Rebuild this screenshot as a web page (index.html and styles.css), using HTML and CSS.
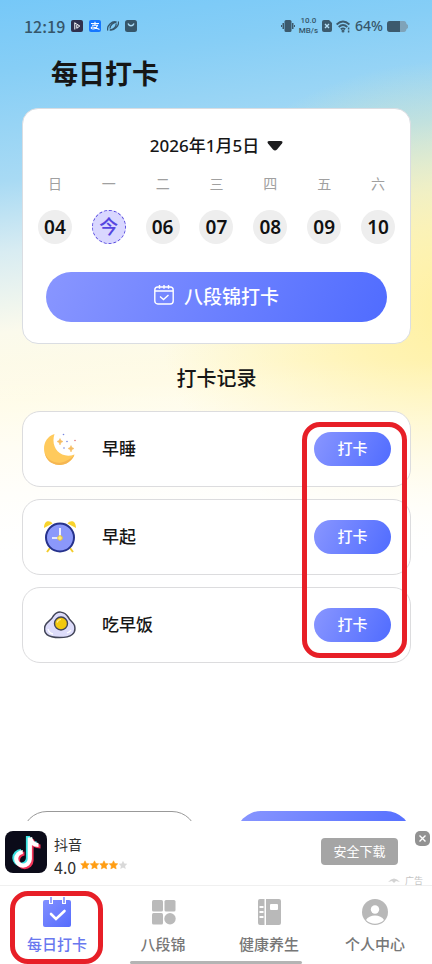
FILE: index.html
```html
<!DOCTYPE html>
<html lang="zh-CN">
<head>
<meta charset="utf-8">
<meta name="viewport" content="width=device-width, initial-scale=1">
<title>每日打卡</title>
<link rel="stylesheet" href="styles.css">
</head>
<body>
<div class="screen">
  <div class="status">
    <div class="status-group">
      <span class="clock">12:19</span>
      <svg width="12" height="12" viewBox="0 0 12 12"><rect width="12" height="12" rx="2" fill="#30304d"/><path d="M3.800 2.500v7M3.800 3l5 3-3 2.300V5" fill="none" stroke="#fff" stroke-width="1"/></svg>
      <svg width="12" height="12" viewBox="0 0 12 12"><rect width="12" height="12" rx="2" fill="#1677ff"/><path d="M2 3.500h8M6 1.800v3.500M3 5.300h5.500C7.500 8 5.500 9 4 9 1.500 9 1.800 6.700 4 7c2 .2 4 1.500 6.500 2.500" fill="none" stroke="#fff" stroke-width="1.100"/></svg>
      <svg width="12" height="12" viewBox="0 0 12 12" fill="none" stroke="#36566a" stroke-width="1.300"><path d="M.8 10.500C-.5 6 5 .5 9.500 2 6 2.500 3 5.500 3 8.500M11.300 1.500c1.200 4-4 9.500-8.500 8.500 3.500-.3 6.500-3 6.500-6.500"/></svg>
      <svg width="12" height="12" viewBox="0 0 12 12"><rect width="12" height="12" rx="2.500" fill="#36566a"/><path d="M3 3.500c1 3 5 3 6 0" fill="none" stroke="#a9dbf7" stroke-width="1.300"/></svg>
    </div>
    <div class="status-group status-right">
      <svg width="14" height="14" viewBox="0 0 14 14" fill="#3c5a6d"><rect x="3.500" y="1" width="7" height="12" rx="1.500"/><path d="M1.500 4h1.500v6H1.500zM11 4h1.500v6H11zM0 6h1v2H0zM13 6h1v2h-1z"/></svg>
      <div class="speed"><span>10.0</span><span>MB/s</span></div>
      <svg width="10" height="12" viewBox="0 0 10 12"><path d="M2 0h5l3 3v7q0 2-2 2H2q-2 0-2-2V2q0-2 2-2z" fill="#3c5a6d"/><path d="M3 4l4 4M7 4L3 8" stroke="#b5def5" stroke-width="1.400"/></svg>
      <svg width="15" height="13" viewBox="0 0 15 13" fill="none" stroke="#3c5a6d" stroke-width="1.800"><path d="M.6 4.500Q7 -1.500 13.400 4.500M2.700 7Q7 3 11.300 7M4.800 9.300Q7 7.500 9.200 9.300"/><circle cx="7" cy="11" r=".6"/><path d="M12.600 7.500v2M12.600 10.500v2" stroke-width="1.500"/></svg>
      <span class="percent">64%</span>
      <svg width="21" height="11" viewBox="0 0 21 11"><path d="M3 0h14q2 0 2.500 3l1.500 1v3l-1.500 1q-.5 3-2.500 3H3q-3 0-3-3V3q0-3 3-3z" fill="#7fa3b9"/><path d="M3 0h10v11H3q-3 0-3-3V3q0-3 3-3z" fill="#3c5a6d"/></svg>
    </div>
  </div>

  <main class="main">
    <h1 class="title">每日打卡</h1>

    <section class="calendar">
      <button class="date" type="button">2026年1月5日
        <svg width="16" height="10" viewBox="0 0 16 10"><path d="M2.500 0h11q3 0 1.500 2.500L10 8.500q-2 2-4 0L1 2.500Q-.5 0 2.500 0z" fill="#1d1d1f"/></svg>
      </button>
      <div class="week">
        <div class="day"><span>日</span><button type="button">04</button></div>
        <div class="day"><span>一</span><button class="today" type="button">今</button></div>
        <div class="day"><span>二</span><button type="button">06</button></div>
        <div class="day"><span>三</span><button type="button">07</button></div>
        <div class="day"><span>四</span><button type="button">08</button></div>
        <div class="day"><span>五</span><button type="button">09</button></div>
        <div class="day"><span>六</span><button type="button">10</button></div>
      </div>
      <button class="primary" type="button">
        <svg width="20" height="20" viewBox="0 0 20 20" fill="none" stroke="#fff" stroke-width="1.400"><rect x=".8" y="2" width="18.400" height="17" rx="3"/><path d="M1 6h18M5.500 0v3.800M10 0v3.800M14.500 0v3.800M6 11.500l3.500 3 5-4.500"/></svg>
        八段锦打卡
      </button>
    </section>

    <h2 class="subtitle">打卡记录</h2>

    <ul class="records">
      <li class="record">
        <svg width="32" height="32" viewBox="0 0 32 32"><path d="M10.500 1C-3 5-3 24 8 30c8 4.500 19 1 22.500-8.500C17 26.500 6 15 10.500 1z" fill="#ffca5c"/><path d="M1 20c3 9 13 12 21 8 4-2 7-4 8.500-6.500C27 31 16 34.500 8 30 4 28 1.500 24 1 20z" fill="#f5b653"/><path d="M16 5.500l1 2 2 1-2 1-1 2.500-1-2.500-2-1 2-1zM27 12.500l1 2 2 1-2 1-1 2.500-1-2.500-2-1 2-1z" fill="#f6bd63" stroke="#f6bd63" stroke-width=".5"/><g fill="#7886df"><circle cx="19.500" cy="1.500" r=".8"/><circle cx="23" cy="8.500" r=".8"/><circle cx="20" cy="15" r=".8"/></g><circle cx="31" cy="7.500" r=".8" fill="#df7276"/></svg>
        <span class="name">早睡</span>
        <button class="check" type="button">打卡</button>
      </li>
      <li class="record">
        <svg width="32" height="32" viewBox="0 0 32 32"><path d="M0 7C0-1 6-1 8.500 2.500zM32 7c0-8-6-8-8.500-4.500z" fill="#f8d32d"/><path d="M6 27l-3 4M26 27l3 4" stroke="#f3cc2b" stroke-width="2"/><circle cx="16" cy="16.500" r="14" fill="#8b98fa" stroke="#26328c" stroke-width="2"/><path d="M16 7v10H8" fill="none" stroke="#fff" stroke-width="1.700"/><circle cx="16" cy="17" r="2.300" fill="#f9e98b" stroke="#edc82d"/></svg>
        <span class="name">早起</span>
        <button class="check" type="button">打卡</button>
      </li>
      <li class="record">
        <svg width="32" height="32" viewBox="0 0 32 32"><path d="M9 7.500c4-6 11-6 15.500 1 1 3 4.500 4 6 8 2 8-3 12-15 12S-1 24.500 1 17c2-5 6-5 8-9.500z" fill="#dddcfa" stroke="#424558" stroke-width="1.500"/><circle cx="17" cy="14.500" r="6.500" fill="#f2c80f" stroke="#424558" stroke-width="1.400"/><path d="M4 20q1 4 5 5M23 24q3-1 4-3" fill="none" stroke="#fff" stroke-width="1.300"/><path d="M13 13.500q1-3 4-3" fill="none" stroke="#ffec91" stroke-width="1.200"/></svg>
        <span class="name">吃早饭</span>
        <button class="check" type="button">打卡</button>
      </li>
      <li class="marker marker-list" aria-hidden="true"></li>
    </ul>

    <div class="actions">
      <button class="action" type="button"></button>
      <button class="action action-fill" type="button"></button>
    </div>
  </main>

  <aside class="ad">
    <svg width="42" height="42" viewBox="0 0 42 42"><rect width="42" height="42" rx="8" fill="#0b0b19"/><g fill="none" stroke-width="4.200"><path d="M23 5v22a6.800 6.800 0 1 1-7-7M23 6c1 4 4 6 8.500 6.500" stroke="#3be3e2"/><path d="M26.500 8v21.500a6.800 6.800 0 1 1-7-7M27 9c1 4 4 6.500 8.500 6.500" stroke="#f33458"/><path d="M24.800 6.500v21.500a6.800 6.800 0 1 1-7-7M25 6.500c1 4.500 4 7.500 8.500 7.500" stroke="#fff"/></g></svg>
    <div class="ad-text">
      <span class="ad-name">抖音</span>
      <div class="rating">4.0
        <svg width="48" height="10" viewBox="0 0 48 10"><defs><path id="star" d="M5 .8l1.300 2.600 3 .4-2.200 2.100.6 3L5 7.500 2.300 8.900l.6-3L.7 3.800l3-.4z" stroke-width=".5"/></defs><g fill="#ff9d12" stroke="#ff9d12"><use href="#star"/><use href="#star" x="9.500"/><use href="#star" x="19"/><use href="#star" x="28.500"/></g><use href="#star" x="38" fill="#d9d9d9"/></svg>
      </div>
    </div>
    <button class="download" type="button">安全下载</button>
    <button class="close" type="button" aria-label="关闭"><svg width="15" height="15" viewBox="0 0 15 15"><rect width="15" height="15" rx="5" fill="#929292"/><path d="M4.500 4.500l6 6M10.500 4.500l-6 6" stroke="#fff" stroke-width="1.400"/></svg></button>
    <span class="ad-tag"><svg width="12" height="5" viewBox="0 0 12 5"><path d="M0 4Q6-3 12 4L8 3 6 5 4 3z" fill="#d3d3d3"/></svg>广告</span>
  </aside>

  <nav class="tabs">
    <a class="tab active" href="#daily">
      <svg width="30" height="30" viewBox="0 0 30 30"><defs><linearGradient id="blue" x2="1" y2="1"><stop stop-color="#8290ff"/><stop offset="1" stop-color="#566cfd"/></linearGradient></defs><rect x="1" y="3" width="28" height="27" rx="2" fill="url(#blue)"/><path d="M9 0v7M22 0v7" stroke="#fff" stroke-width="4"/><path d="M9 0v6M22 0v6" stroke="#8090fc" stroke-width="1.600"/><path d="M9 17l5 5 8.500-8" fill="none" stroke="#fff" stroke-width="2.600" stroke-linecap="round"/></svg>
      每日打卡
    </a>
    <a class="tab" href="#exercise">
      <svg width="30" height="30" viewBox="0 0 30 30" fill="#bababa"><rect x="4" y="3" width="11" height="11.500" rx="1.500"/><rect x="16.500" y="3" width="11" height="11.500" rx="1.500"/><rect x="4" y="16" width="11" height="11.500" rx="1.500"/><circle cx="22" cy="21.800" r="5.700"/></svg>
      八段锦
    </a>
    <a class="tab" href="#health">
      <svg width="30" height="30" viewBox="0 0 30 30"><path d="M6 2h4.500v26H6q-2 0-2-2V4q0-2 2-2zM12 2h13q2 0 2 2v22q0 2-2 2H12z" fill="#b9b9b9"/><path d="M5.500 10h4M5.500 15h4M5.500 20h4" stroke="#fff" stroke-width="2"/><rect x="16" y="7" width="8" height="6" rx="1" fill="#fff"/></svg>
      健康养生
    </a>
    <a class="tab" href="#profile">
      <svg width="30" height="30" viewBox="0 0 30 30"><circle cx="15" cy="15" r="13" fill="#b8b8b8"/><circle cx="15" cy="12.500" r="4.200" fill="#fff"/><path d="M6 23c3-6 15-6 18 0-5 5-13 5-18 0z" fill="#fff"/></svg>
      个人中心
    </a>
    <div class="marker marker-tab" aria-hidden="true"></div>
    <div class="home-bar"></div>
  </nav>
</div>
</body>
</html>
```
FILE: styles.css
```css
* { box-sizing: border-box; }

body {
  margin: 0;
  background: #fff;
  color: #161616;
  font-family: "Noto Sans CJK SC", "Noto Sans", sans-serif;
}

button {
  margin: 0;
  padding: 0;
  border: 0;
  background: none;
  color: inherit;
  font: inherit;
  cursor: pointer;
}

svg { display: block; flex: none; }

.screen {
  display: flex;
  flex-direction: column;
  min-height: 100vh;
  overflow: hidden;
  background:
    linear-gradient(180deg, transparent 360px, #fff 560px),
    radial-gradient(ellipse 300px 250px at 106% 310px, #fff0a0 0%, #fff2aacc 35%, #fff2aa00 100%),
    linear-gradient(172deg, #76c8f8 0, #86cef6 70px, #a8daf4 180px, #d8ecf2 250px, #fbfaec 330px, #fffbe4 400px, #fff 580px);
}

.status {
  display: flex;
  justify-content: space-between;
  height: 52px;
  padding: 0 24px;
  color: #36566a;
}

.status-group { display: flex; align-items: center; gap: 6px; }
.status-right { gap: 4px; }
.clock { font-size: 16px; font-weight: 500; line-height: 20px; }

.speed {
  display: flex;
  flex-direction: column;
  align-items: center;
  font: 500 8px/10px Roboto, sans-serif;
}

.percent { font: 500 14px/20px "Noto Sans", sans-serif; }

.main {
  display: flex;
  flex: 1;
  flex-direction: column;
  padding: 0 21px 0 22px;
}

.title {
  margin: 0 0 14px 29px;
  font-size: 27px;
  font-weight: 700;
  line-height: 42px;
}

.calendar {
  display: flex;
  flex-direction: column;
  align-items: center;
  padding: 24px 5px 21px;
  border: 1px solid #dadde2;
  border-radius: 16px;
  background: #fff;
}

.date {
  display: flex;
  align-items: center;
  gap: 8px;
  font-family: "Noto Sans", "Noto Sans CJK SC", sans-serif;
  font-size: 17px;
  font-weight: 500;
  line-height: 26px;
}

.week {
  display: grid;
  grid-template-columns: repeat(7, 1fr);
  width: 100%;
  margin-top: 13px;
}

.day {
  display: flex;
  flex-direction: column;
  align-items: center;
  gap: 16px;
  color: #a0a0a0;
  font-size: 14px;
  line-height: 22px;
}

.day button {
  width: 34px;
  height: 34px;
  border-radius: 50%;
  background: #eee;
  color: #111;
  font-family: "Noto Sans", "Noto Sans CJK SC", sans-serif;
  font-size: 19px;
  font-weight: 600;
  line-height: 32px;
}

.day .today {
  border: 1px dashed #5b4ee0;
  background: #d9d7ff;
  color: #5546df;
  font-weight: 500;
}

.primary,
.check,
.action-fill {
  background: linear-gradient(115deg, #8996ff, #506cff);
  color: #fff;
}

.primary {
  display: flex;
  align-items: center;
  align-self: stretch;
  justify-content: center;
  gap: 10px;
  height: 50px;
  margin: 28px 18px 0;
  padding-bottom: 4px;
  border-radius: 25px;
  font-size: 19px;
  font-weight: 500;
}

.subtitle {
  margin: 20px 0 19px;
  font-size: 20px;
  font-weight: 500;
  line-height: 28px;
  text-align: center;
}

.records {
  position: relative;
  display: flex;
  flex-direction: column;
  gap: 12px;
  margin: 0;
  padding: 0;
  list-style: none;
}

.record {
  display: flex;
  align-items: center;
  height: 76px;
  padding: 0 19px 0 21px;
  border: 1px solid #dcdcde;
  border-radius: 18px;
  background: #fff;
}

.name { margin-left: 26px; padding-bottom: 3px; font-size: 17px; font-weight: 500; }

.check {
  width: 77px;
  height: 34px;
  margin-left: auto;
  padding-bottom: 3px;
  border-radius: 17px;
  font-size: 15px;
  font-weight: 500;
}

.marker {
  position: absolute;
  border: 5px solid #e71f27;
  border-radius: 18px;
  pointer-events: none;
}

.marker-list { top: 11px; right: 4px; bottom: 5px; width: 105px; }

.actions {
  display: flex;
  justify-content: space-between;
  height: 10px;
  margin-top: auto;
  overflow: hidden;
}

.action {
  width: 45%;
  height: 50px;
  border: 1px solid #999;
  border-radius: 25px;
  background: #fff;
}

.action-fill { border: 0; background: linear-gradient(115deg, #8996ff, #506cff); }

.ad {
  position: relative;
  display: flex;
  align-items: center;
  height: 65px;
  padding: 0 34px 3px 5px;
  border-bottom: 1px solid #f0f0f0;
  background: #fff;
}

.ad-text { margin-left: 7px; padding-top: 8px; color: #303030; }
.ad-name { display: block; font-size: 14px; line-height: 22px; }
.rating { display: flex; align-items: center; gap: 4px; font-size: 16px; line-height: 24px; }
.rating svg { margin-bottom: 4px; }

.download {
  width: 77px;
  height: 27px;
  margin-left: auto;
  padding-bottom: 2px;
  border-radius: 4px;
  background: #a5a5a5;
  color: #fff;
  font-size: 13px;
}

.close { position: absolute; top: 10px; right: 2px; }

.ad-tag {
  position: absolute;
  right: 9px;
  bottom: 0;
  display: flex;
  align-items: center;
  gap: 5px;
  color: #c4c4c4;
  font-size: 9px;
  line-height: 9px;
}

.tabs {
  position: relative;
  display: grid;
  grid-template-columns: repeat(4, 1fr);
  height: 78px;
  padding: 11px 4px 0;
  background: #fff;
}

.tab {
  display: flex;
  flex-direction: column;
  align-items: center;
  gap: 5px;
  color: #777;
  font-size: 15px;
  font-weight: 500;
  line-height: 24px;
  text-decoration: none;
}

.active { color: #6978ef; }
.marker-tab { top: 5px; bottom: 0; left: 10px; width: 93px; }

.home-bar {
  position: absolute;
  bottom: 0;
  left: 30%;
  width: 40%;
  height: 3px;
  border-radius: 2px;
  background: #b4b4b4;
}
```
